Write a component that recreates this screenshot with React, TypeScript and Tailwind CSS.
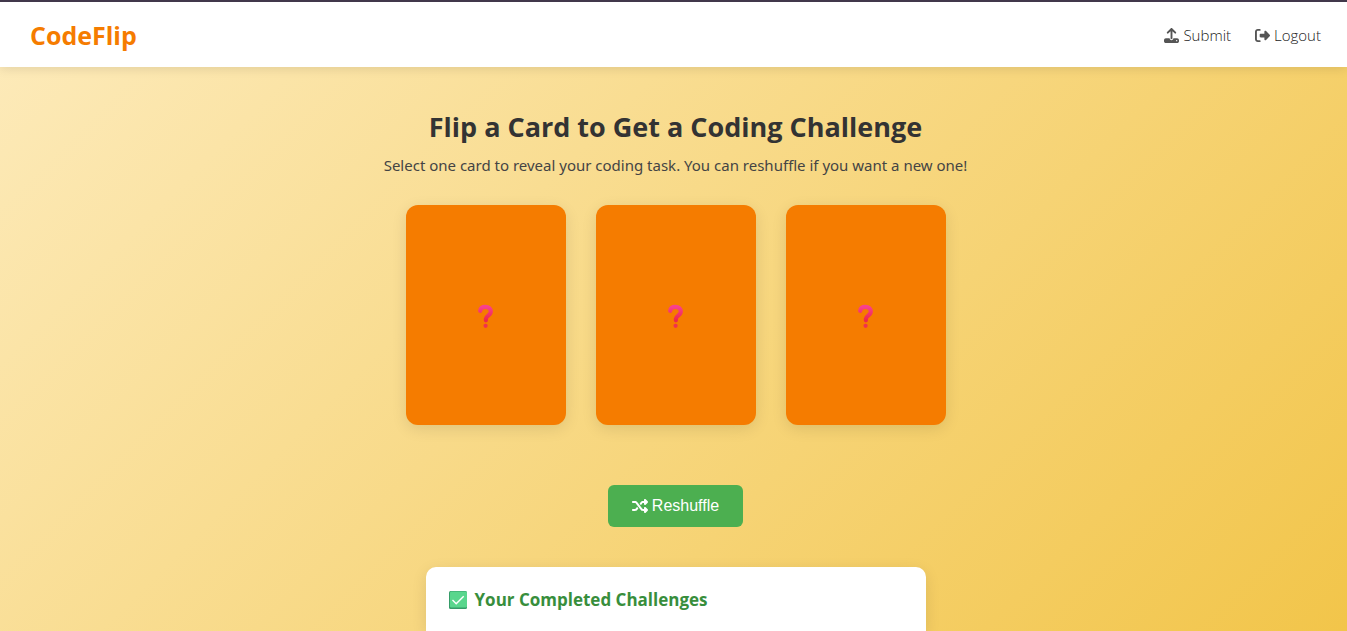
import { FaUpload, FaRightFromBracket, FaShuffle } from "react-icons/fa6";

function QuestionMark() {
  return (
    <svg viewBox="0 0 16 24" className="h-6 w-4" aria-hidden="true">
      <defs>
        <linearGradient id="mark" x1="0" y1="0" x2="0" y2="1">
          <stop offset="0" stopColor="#f8408c" />
          <stop offset="1" stopColor="#ee2848" />
        </linearGradient>
      </defs>
      <path d="M2.200 6.800C2.500 4.200 4.600 2.900 7.400 2.900c3.200 0 5.400 1.800 5.400 4.700 0 4-4.900 3.900-4.900 7.200v1.500" fill="none" stroke="url(#mark)" strokeWidth="4.200" strokeLinecap="round" />
      <circle cx="7.600" cy="21.800" r="2.100" fill="#f2304f" />
    </svg>
  );
}

function CheckBadge() {
  return (
    <svg viewBox="0 0 18 18" className="h-[18px] w-[18px] shrink-0" aria-hidden="true">
      <rect width="18" height="18" rx="1.500" fill="#359c68" />
      <rect x="1" y="0.500" width="17" height="16" rx="1" fill="#59d68d" />
      <path d="M3.500 9l3.700 3.700 7.500-7.500" fill="none" stroke="#fff" strokeWidth="1.400" />
    </svg>
  );
}

const cards = [1, 2, 3];

export default function App() {
  return (
    <div className="flex min-h-screen flex-col bg-[linear-gradient(135deg,#fdebbc,#f2c54a)] font-['Open_Sans','Noto_Sans',sans-serif] text-[#333]">
      <header className="relative flex h-[67px] items-center justify-between border-t-2 border-[#41384b] bg-white px-[30px] pt-0.5 shadow-[0_2px_10px_rgba(0,0,0,0.1)]">
        <div className="text-[25px] font-bold text-[#f57c00]">CodeFlip</div>
        <nav className="-mr-1 flex gap-6 text-[15px] font-light text-[#222]">
          <a href="#submit" className="flex items-center gap-1"><FaUpload className="text-[#555]" />Submit</a>
          <a href="#logout" className="flex items-center gap-1"><FaRightFromBracket className="text-[#555]" />Logout</a>
        </nav>
      </header>
      <main className="flex flex-1 flex-col items-center pt-10 pl-1">
        <h1 className="text-[27px] leading-10 font-bold">Flip a Card to Get a Coding Challenge</h1>
        <p className="mt-1.5 font-['Noto_Sans',sans-serif] text-[15px] leading-6 text-[#444]">Select one card to reveal your coding task. You can reshuffle if you want a new one!</p>
        <div className="mt-7 flex gap-[30px]">
          {cards.map((n) => (
            <button key={n} type="button" aria-label={`Card ${n}`} className="flex h-[220px] w-[160px] items-center justify-center rounded-xl bg-[#f57c00] pt-0.5 shadow-[0_4px_15px_rgba(0,0,0,0.1)]">
              <QuestionMark />
            </button>
          ))}
        </div>
        <button type="button" className="mt-[60px] flex h-[42px] items-center gap-1 rounded-md bg-[#4caf50] px-6 font-['Liberation_Sans',sans-serif] text-base text-white">
          <FaShuffle />Reshuffle
        </button>
        <section className="mt-10 w-[500px] max-w-full flex-1 rounded-t-[10px] bg-white px-[23px] pt-[21px] shadow-[0_4px_15px_rgba(0,0,0,0.1)]">
          <h2 className="flex items-center gap-2 text-[17px] leading-6 font-bold text-[#388e3c]"><CheckBadge />Your Completed Challenges</h2>
        </section>
      </main>
    </div>
  );
}
